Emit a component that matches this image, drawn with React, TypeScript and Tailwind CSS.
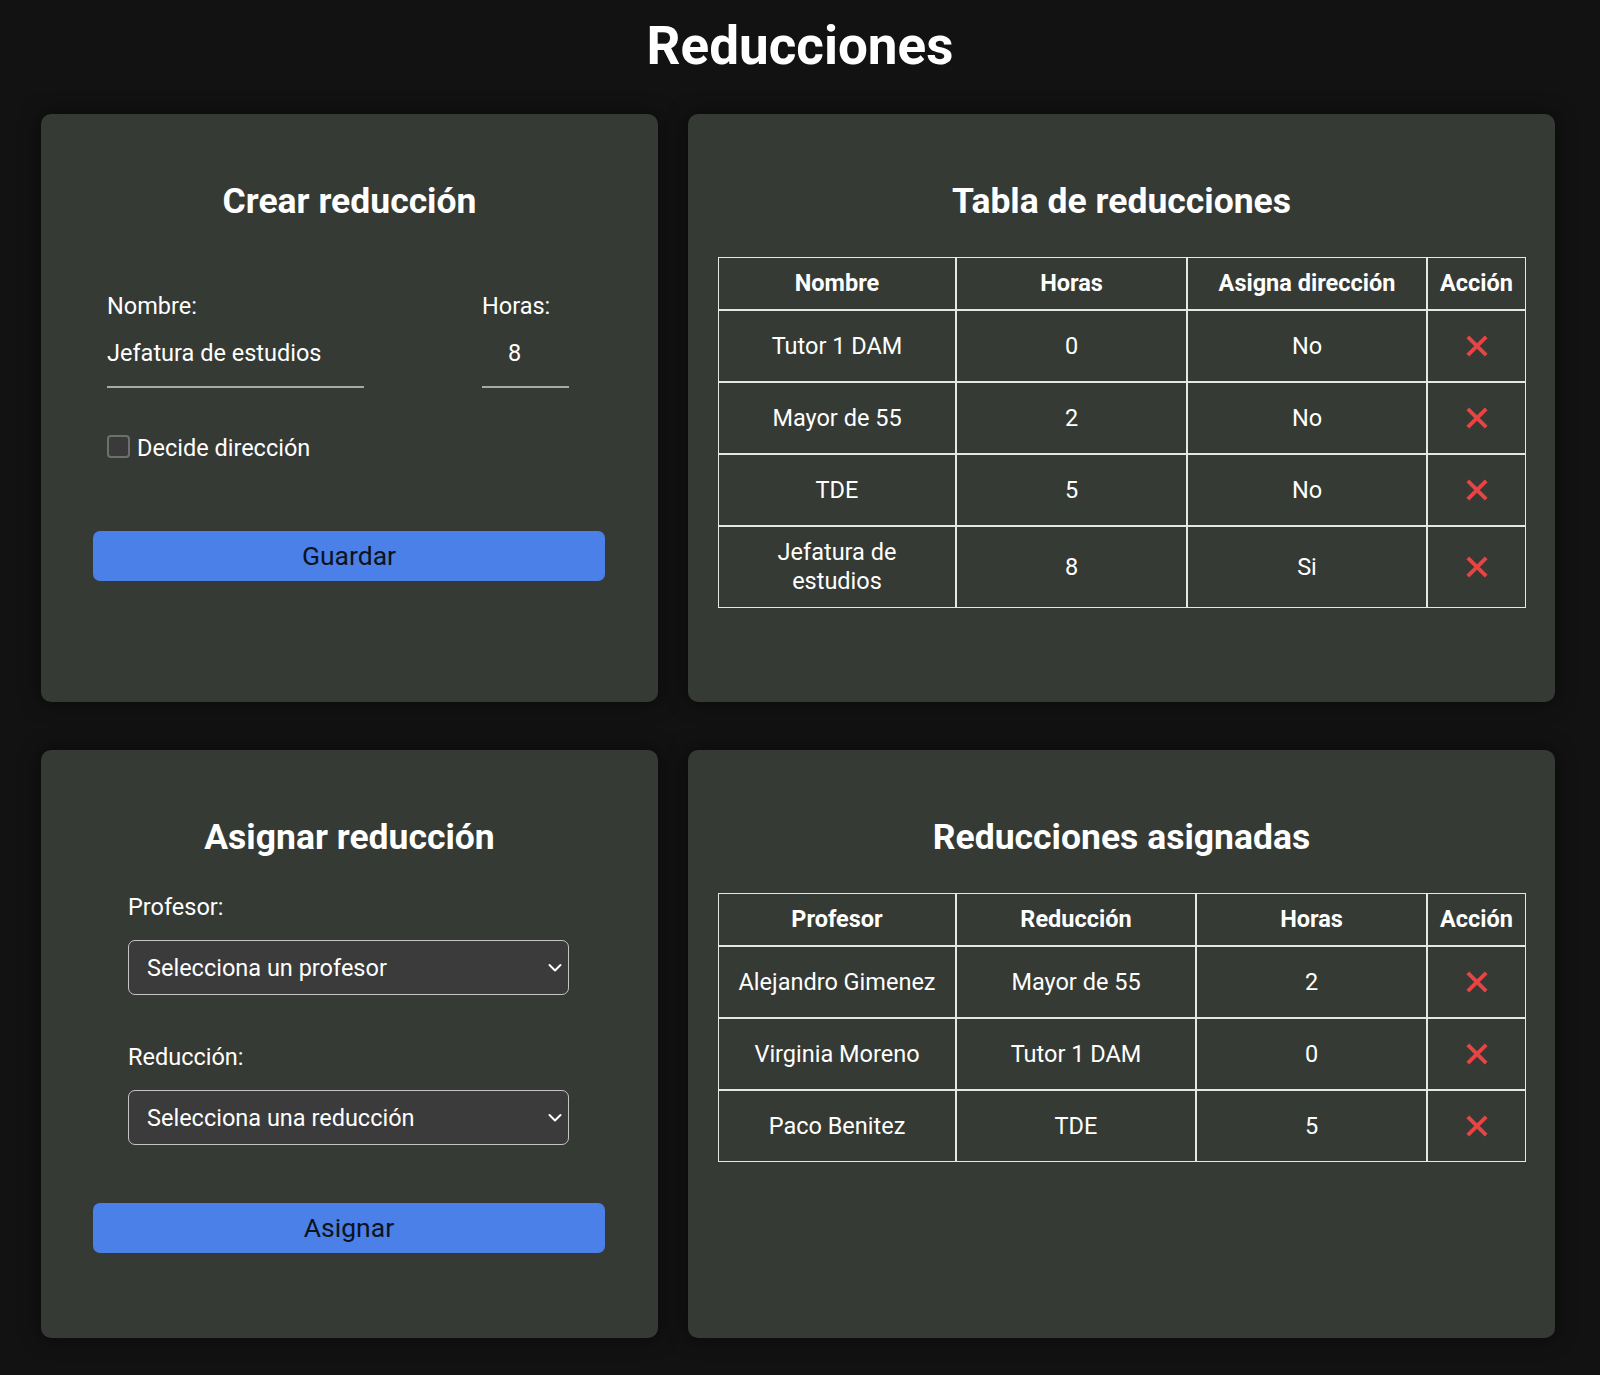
import React from "react";

function XIcon() {
  return (
    <svg width="22" height="22" viewBox="0 0 22 22" aria-hidden="true">
      <path d="M1.8 1.8 L20.2 20.2 M20.2 1.8 L1.8 20.2" stroke="#e84444" strokeWidth="3.9" strokeLinecap="butt" />
    </svg>
  );
}

function Chevron() {
  return (
    <svg width="14" height="9" viewBox="0 0 14 9" aria-hidden="true">
      <path d="M1.5 1.5 L7 7 L12.5 1.5" stroke="#ffffff" strokeWidth="2" fill="none" strokeLinecap="round" strokeLinejoin="round" />
    </svg>
  );
}

type Row = string[];

function DataTable({ headers, rows, widths }: { headers: string[]; rows: Row[]; widths: number[] }) {
  return (
    <table className="ml-[30px] w-[808px] table-fixed border-separate border-spacing-0 text-[23.5px] leading-[29px] text-white">
      <colgroup>
        {widths.map((w, i) => (
          <col key={i} style={{ width: w }} />
        ))}
      </colgroup>
      <thead>
        <tr>
          {headers.map((h, i) => (
            <th
              key={h}
              className={
                i === headers.length - 1
                  ? "border border-[#e6e6e6] px-[4px] py-[11px] text-center font-bold"
                  : "border border-[#e6e6e6] px-[14px] py-[11px] text-center font-bold"
              }
            >
              {h}
            </th>
          ))}
        </tr>
      </thead>
      <tbody>
        {rows.map((r, i) => (
          <tr key={i}>
            {r.map((c, j) => (
              <td key={j} className="border border-[#e6e6e6] px-[14px] py-[11px] text-center align-middle">
                {c}
              </td>
            ))}
            <td className="border border-[#e6e6e6] px-2 py-[11px] text-center align-middle">
              <button className="mx-auto flex h-[48px] w-[40px] items-center justify-center">
                <XIcon />
              </button>
            </td>
          </tr>
        ))}
      </tbody>
    </table>
  );
}

export default function App() {
  const card = "h-[588px] rounded-[10px] bg-[#353a35] shadow-[0_0_20px_rgba(0,0,0,0.55)]";
  return (
    <div
      className="min-h-screen bg-[#121212] pt-[14px] pb-[37px] text-white"
      style={{ fontFamily: "Roboto, 'Noto Sans', Arial, sans-serif" }}
    >
      <h1 className="text-center text-[53px] font-bold leading-[64px]">Reducciones</h1>
      <div className="mt-[36px] grid grid-cols-[617px_867px] gap-x-[30px] gap-y-[48px] pl-[41px]">
        {/* Crear reducción */}
        <div className={card}>
          <h2 className="pt-[65px] text-center text-[35.5px] font-bold leading-[44px]">Crear reducción</h2>
          <div className="mt-[69px] flex gap-[118px] pl-[66px] text-[23.5px]">
            <div className="w-[257px]">
              <div className="leading-[28px]">Nombre:</div>
              <input
                readOnly
                value="Jefatura de estudios"
                className="h-[68px] w-full border-b-2 border-[#a8a8a8] bg-transparent text-[23.5px] text-white outline-none"
              />
            </div>
            <div className="w-[87px]">
              <div className="leading-[28px]">Horas:</div>
              <input
                readOnly
                value="8"
                className="h-[68px] w-full border-b-2 border-[#a8a8a8] bg-transparent pr-[22px] text-center text-[23.5px] text-white outline-none"
              />
            </div>
          </div>
          <label className="mt-[44px] flex h-[28px] items-center pl-[66px] text-[23.5px]">
            <span className="mr-[7px] inline-block h-[23px] w-[23px] rounded-[4px] border-2 border-[#6f6f6f] bg-[#3a3a3a]" />
            <span className="pt-[6px]">Decide dirección</span>
          </label>
          <button className="mx-[52px] mt-[71px] block h-[50px] w-[512px] rounded-[7px] bg-[#4a80e8] text-[26.5px] text-[#0d1320]">
            Guardar
          </button>
        </div>

        {/* Tabla de reducciones */}
        <div className={card}>
          <h2 className="pt-[65px] text-center text-[35.5px] font-bold leading-[44px]">Tabla de reducciones</h2>
          <div className="mt-[34px]">
            <DataTable
              headers={["Nombre", "Horas", "Asigna dirección", "Acción"]}
              widths={[238, 231, 240, 99]}
              rows={[
                ["Tutor 1 DAM", "0", "No"],
                ["Mayor de 55", "2", "No"],
                ["TDE", "5", "No"],
                ["Jefatura de estudios", "8", "Si"],
              ]}
            />
          </div>
        </div>

        {/* Asignar reducción */}
        <div className={card}>
          <h2 className="pt-[65px] text-center text-[35.5px] font-bold leading-[44px]">Asignar reducción</h2>
          <div className="pl-[87px] text-[23.5px]">
            <div className="mt-[34px] leading-[28px]">Profesor:</div>
            <div className="relative mt-[19px] h-[55px] w-[441px] rounded-[7px] border-[1.5px] border-[#c4c4c4] bg-[#3b3b3b]">
              <div className="flex h-full items-center pl-[18px] leading-[28px]">Selecciona un profesor</div>
              <div className="absolute right-[6px] top-1/2 -translate-y-1/2">
                <Chevron />
              </div>
            </div>
            <div className="mt-[48px] leading-[28px]">Reducción:</div>
            <div className="relative mt-[19px] h-[55px] w-[441px] rounded-[7px] border-[1.5px] border-[#c4c4c4] bg-[#3b3b3b]">
              <div className="flex h-full items-center pl-[18px] leading-[28px]">Selecciona una reducción</div>
              <div className="absolute right-[6px] top-1/2 -translate-y-1/2">
                <Chevron />
              </div>
            </div>
          </div>
          <button className="mx-[52px] mt-[58px] block h-[50px] w-[512px] rounded-[7px] bg-[#4a80e8] text-[26.5px] text-[#0d1320]">
            Asignar
          </button>
        </div>

        {/* Reducciones asignadas */}
        <div className={card}>
          <h2 className="pt-[65px] text-center text-[35.5px] font-bold leading-[44px]">Reducciones asignadas</h2>
          <div className="mt-[34px]">
            <DataTable
              headers={["Profesor", "Reducción", "Horas", "Acción"]}
              widths={[238, 240, 231, 99]}
              rows={[
                ["Alejandro Gimenez", "Mayor de 55", "2"],
                ["Virginia Moreno", "Tutor 1 DAM", "0"],
                ["Paco Benitez", "TDE", "5"],
              ]}
            />
          </div>
        </div>
      </div>
    </div>
  );
}
